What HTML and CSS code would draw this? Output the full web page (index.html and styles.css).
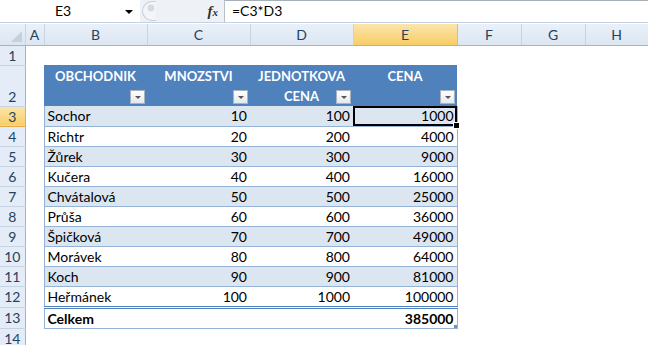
FILE: index.html
```html
<!DOCTYPE html>
<html lang="cs">
<head>
    <meta charset="UTF-8">
    <title>Obchodnici</title>
    <link rel="stylesheet" href="styles.css">
</head>
<body>
    <div class="formula-bar">
        <div class="name-box">
            <span class="cell-ref">E3</span>
            <span class="nb-arrow"></span>
        </div>
        <div class="fx-area">
            <span class="splitter"></span>
            <span class="fx">f<i>x</i></span>
        </div>
        <div class="formula">=C3*D3</div>
    </div>

    <table class="sheet">
        <colgroup>
            <col class="c-rh">
            <col class="c-a">
            <col class="c-b">
            <col class="c-c">
            <col class="c-d">
            <col class="c-e">
            <col class="c-f">
            <col class="c-g">
            <col class="c-h">
        </colgroup>
        <thead>
            <tr class="col-heads">
                <th class="corner"><span class="corner-tri"></span></th>
                <th>A</th>
                <th>B</th>
                <th>C</th>
                <th>D</th>
                <th class="sel">E</th>
                <th>F</th>
                <th>G</th>
                <th>H</th>
            </tr>
        </thead>
        <tbody>
            <tr class="row">
                <th class="rh">1</th>
                <td colspan="8"></td>
            </tr>
            <tr class="row tall">
                <th class="rh rh-tall">2</th>
                <td></td>
                <td class="hd">OBCHODNIK<span class="dd"></span></td>
                <td class="hd">MNOZSTVI<span class="dd"></span></td>
                <td class="hd">JEDNOTKOVA CENA<span class="dd"></span></td>
                <td class="hd">CENA<span class="dd"></span></td>
                <td colspan="3"></td>
            </tr>
            <tr class="row band">
                <th class="rh sel">3</th>
                <td></td>
                <td class="txt first">Sochor</td>
                <td class="num">10</td>
                <td class="num">100</td>
                <td class="num last active">1000<span class="handle"></span></td>
                <td colspan="3"></td>
            </tr>
            <tr class="row">
                <th class="rh">4</th>
                <td></td>
                <td class="txt first">Richtr</td>
                <td class="num">20</td>
                <td class="num">200</td>
                <td class="num last">4000</td>
                <td colspan="3"></td>
            </tr>
            <tr class="row band">
                <th class="rh">5</th>
                <td></td>
                <td class="txt first">Žůrek</td>
                <td class="num">30</td>
                <td class="num">300</td>
                <td class="num last">9000</td>
                <td colspan="3"></td>
            </tr>
            <tr class="row">
                <th class="rh">6</th>
                <td></td>
                <td class="txt first">Kučera</td>
                <td class="num">40</td>
                <td class="num">400</td>
                <td class="num last">16000</td>
                <td colspan="3"></td>
            </tr>
            <tr class="row band">
                <th class="rh">7</th>
                <td></td>
                <td class="txt first">Chvátalová</td>
                <td class="num">50</td>
                <td class="num">500</td>
                <td class="num last">25000</td>
                <td colspan="3"></td>
            </tr>
            <tr class="row">
                <th class="rh">8</th>
                <td></td>
                <td class="txt first">Průša</td>
                <td class="num">60</td>
                <td class="num">600</td>
                <td class="num last">36000</td>
                <td colspan="3"></td>
            </tr>
            <tr class="row band">
                <th class="rh">9</th>
                <td></td>
                <td class="txt first">Špičková</td>
                <td class="num">70</td>
                <td class="num">700</td>
                <td class="num last">49000</td>
                <td colspan="3"></td>
            </tr>
            <tr class="row">
                <th class="rh">10</th>
                <td></td>
                <td class="txt first">Morávek</td>
                <td class="num">80</td>
                <td class="num">800</td>
                <td class="num last">64000</td>
                <td colspan="3"></td>
            </tr>
            <tr class="row band">
                <th class="rh">11</th>
                <td></td>
                <td class="txt first">Koch</td>
                <td class="num">90</td>
                <td class="num">900</td>
                <td class="num last">81000</td>
                <td colspan="3"></td>
            </tr>
            <tr class="row">
                <th class="rh">12</th>
                <td></td>
                <td class="txt first">Heřmánek</td>
                <td class="num">100</td>
                <td class="num">1000</td>
                <td class="num last">100000</td>
                <td colspan="3"></td>
            </tr>
            <tr class="row total">
                <th class="rh">13</th>
                <td></td>
                <td class="txt first">Celkem</td>
                <td class="num"></td>
                <td class="num"></td>
                <td class="num last">385000<span class="corner-mark"></span></td>
                <td colspan="3"></td>
            </tr>
            <tr class="row">
                <th class="rh">14</th>
                <td colspan="8"></td>
            </tr>
        </tbody>
    </table>
</body>
</html>
```

FILE: styles.css
```css
body {
    margin: 0;
    padding: 0;
    background: #fff;
    font-family: 'Lato', 'Liberation Sans', sans-serif;
    font-size: 14px;
    color: #000;
    overflow: hidden;
}

/* formula bar */
.formula-bar {
    display: flex;
    height: 22px;
    border-bottom: 1px solid #c5d1de;
}
.name-box {
    width: 140px;
    position: relative;
    display: flex;
    align-items: center;
    background: #fff;
}
.cell-ref {
    margin-left: 55px;
    line-height: 20px;
}
.nb-arrow {
    position: absolute;
    right: 7px;
    top: 10px;
    border-left: 4px solid transparent;
    border-right: 4px solid transparent;
    border-top: 4px solid #000;
}
.fx-area {
    width: 85px;
    display: flex;
    align-items: center;
    justify-content: space-between;
    background: #eef2f7;
    border-right: 1px solid #b6bfca;
    padding-right: 6px;
    box-sizing: border-box;
}
.splitter {
    width: 14px;
    height: 20px;
    margin-left: 2px;
    border-radius: 10px 0 0 10px;
    border: 1px solid #c8cfd8;
    border-right: none;
    background: radial-gradient(circle at 8px 6px, #d7dbe0 0 3px, #f3f5f8 4px);
    box-sizing: border-box;
}
.fx {
    font-family: 'Liberation Serif', serif;
    font-style: italic;
    font-weight: bold;
    font-size: 15px;
    color: #333;
}
.fx i {
    font-size: 11px;
}
.formula {
    flex: 1;
    border-top: 1px solid #a7afb9;
    padding-left: 7px;
    line-height: 20px;
}

/* sheet grid */
.sheet {
    border-collapse: collapse;
    table-layout: fixed;
    width: 648px;
    margin-top: 1px;
}
.c-rh { width: 25px; }
.c-a { width: 19px; }
.c-b { width: 103px; }
.c-c { width: 103px; }
.c-d { width: 103px; }
.c-e { width: 104px; }
.c-f { width: 64px; }
.c-g { width: 64px; }
.c-h { width: 63px; }

.sheet td, .sheet th {
    padding: 0;
    height: 19px;
    line-height: 19px;
    overflow: hidden;
    white-space: nowrap;
}

.sheet .col-heads th {
    height: 21px;
    font-weight: normal;
    color: #27415f;
    background: linear-gradient(#e9f0f8, #dce6f2);
    border-right: 1px solid #c5d3e3;
    border-bottom: 1px solid #9eb6ce;
    text-align: center;
}
.sheet .col-heads th.sel {
    background: linear-gradient(#fbe5ac, #f7cd66);
    border-right: 1px solid #f2b75b;
    border-left: 1px solid #f2b75b;
    border-bottom: 1px solid #e5a84a;
}
.sheet .corner {
    position: relative;
}
.corner-tri {
    position: absolute;
    right: 3px;
    bottom: 3px;
    border-left: 11px solid transparent;
    border-bottom: 11px solid #c7d0da;
}

.sheet .rh {
    font-weight: normal;
    color: #27415f;
    text-align: center;
    background: #e4ecf7;
    border-right: 1px solid #9eb6ce;
    border-bottom: 1px solid #c5d3e3;
}
.sheet .rh-tall {
    vertical-align: bottom;
}
.sheet .rh.sel {
    background: linear-gradient(#fbe5ac, #f7cd66);
    border-bottom: 1px solid #e5a84a;
}

/* table region */
.sheet .tall td {
    height: 38px;
}
.sheet .hd {
    position: relative;
    background: #4f81bd;
    color: #fff;
    font-weight: bold;
    font-size: 13px;
    text-align: center;
    vertical-align: top;
    white-space: normal;
    line-height: 20px;
    padding: 0 2px;
    border-top: 1px solid #4f81bd;
}
.dd {
    position: absolute;
    right: 2px;
    bottom: 2px;
    width: 15px;
    height: 14px;
    box-sizing: border-box;
    border: 1px solid #a9b3bf;
    background: linear-gradient(#ffffff, #e4e8ee);
}
.dd::after {
    content: "";
    position: absolute;
    left: 4px;
    top: 5px;
    border-left: 3px solid transparent;
    border-right: 3px solid transparent;
    border-top: 3px solid #555;
}

.sheet .txt {
    padding-left: 3px;
    border-bottom: 1px solid #95b3d7;
}
.sheet .num {
    text-align: right;
    padding-right: 3px;
    border-bottom: 1px solid #95b3d7;
}
.sheet .first {
    border-left: 1px solid #95b3d7;
}
.sheet .last {
    border-right: 1px solid #95b3d7;
    position: relative;
    overflow: visible;
}
.sheet .band .txt, .sheet .band .num {
    background: #dce6f1;
}

.sheet .active {
    outline: 2px solid #000;
    outline-offset: -2px;
}
.handle {
    position: absolute;
    right: -3px;
    bottom: -3px;
    width: 5px;
    height: 5px;
    background: #000;
    border: 1px solid #fff;
}

.sheet .total td.txt, .sheet .total td.num {
    font-weight: bold;
    border-top: 3px double #4f81bd;
    background: #fff;
    height: 18px;
}
.corner-mark {
    position: absolute;
    right: 0;
    bottom: 0;
    width: 3px;
    height: 3px;
    background: #7f8fa6;
}
```
